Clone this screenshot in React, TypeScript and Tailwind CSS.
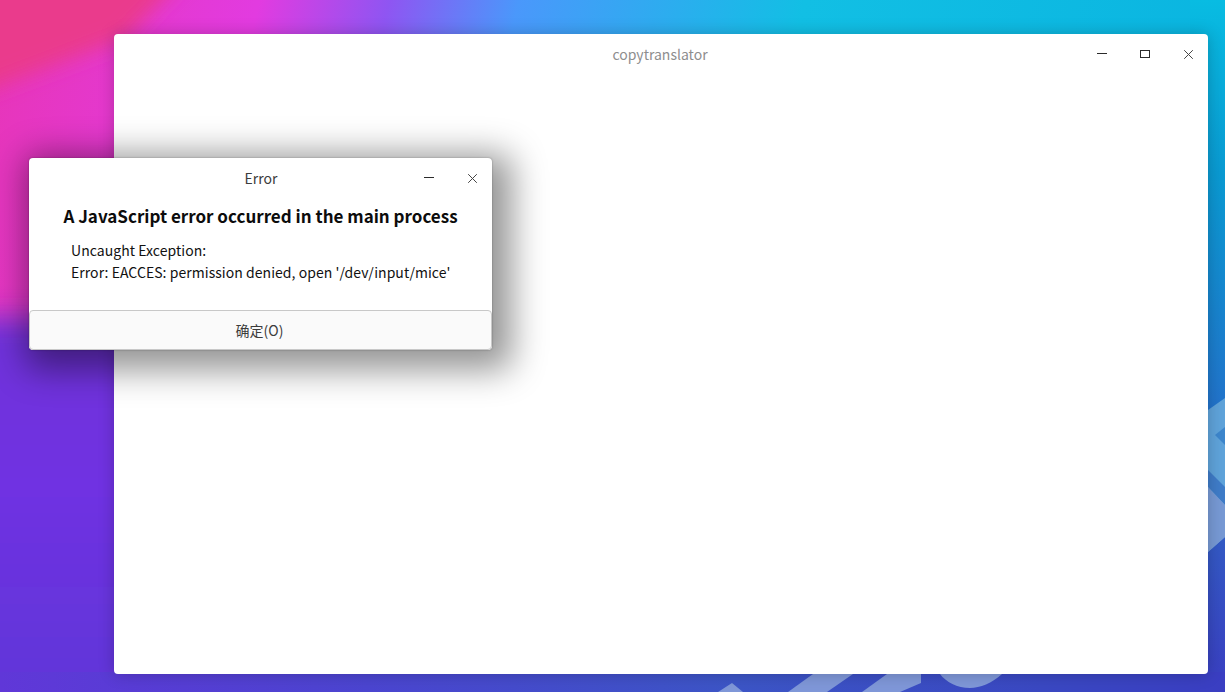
import React from 'react';

const FONT = "font-['Noto_Sans_CJK_SC','Noto_Sans',sans-serif]";

// Desktop wallpaper, only slivers of it are visible around the windows
const Wallpaper = () => (
  <svg className="absolute inset-0" width="1225" height="692" viewBox="0 0 1225 692">
    <defs>
      <linearGradient id="base" x1="0" y1="0" x2="1225" y2="300" gradientUnits="userSpaceOnUse">
        <stop offset="0" stopColor="#e735b8" />
        <stop offset="0.2" stopColor="#e23be0" />
        <stop offset="0.3" stopColor="#8f55f2" />
        <stop offset="0.4" stopColor="#4a98fb" />
        <stop offset="0.62" stopColor="#12bfe4" />
        <stop offset="1" stopColor="#09b4e0" />
      </linearGradient>
      <linearGradient id="low" x1="0" y1="290" x2="0" y2="692" gradientUnits="userSpaceOnUse">
        <stop offset="0" stopColor="#7030d8" />
        <stop offset="0.5" stopColor="#6f30e2" />
        <stop offset="1" stopColor="#6037d8" />
      </linearGradient>
      <linearGradient id="right" x1="1215" y1="0" x2="1215" y2="692" gradientUnits="userSpaceOnUse">
        <stop offset="0" stopColor="#08bce2" />
        <stop offset="0.25" stopColor="#0a9ad2" />
        <stop offset="0.55" stopColor="#1f78cc" />
        <stop offset="0.8" stopColor="#3457c4" />
        <stop offset="1" stopColor="#3a3ec2" />
      </linearGradient>
      <linearGradient id="bottom" x1="0" y1="0" x2="1225" y2="0" gradientUnits="userSpaceOnUse">
        <stop offset="0" stopColor="#6037d8" />
        <stop offset="0.3" stopColor="#4b45d0" />
        <stop offset="0.6" stopColor="#3c55c6" />
        <stop offset="0.85" stopColor="#3a48c2" />
        <stop offset="1" stopColor="#3a3ec2" />
      </linearGradient>
      <filter id="soft"><feGaussianBlur stdDeviation="10" /></filter>
      <filter id="softer"><feGaussianBlur stdDeviation="14" /></filter>
    </defs>
    <rect width="1225" height="692" fill="url(#base)" />
    <polygon points="-30,-30 190,-30 125,38 0,85 -30,96" fill="#ea3a8c" filter="url(#soft)" />
    <polygon points="-60,318 160,318 160,740 -60,740" fill="url(#low)" filter="url(#softer)" />
    <rect x="1190" y="0" width="35" height="692" fill="url(#right)" />
    <rect x="0" y="672" width="1225" height="20" fill="url(#bottom)" />
    {/* isometric shapes, bottom right of the wallpaper */}
    <polygon points="1208,410 1225,398 1225,537 1208,552" fill="#5fa3da" />
    <polygon points="1215,435 1225,427 1225,445" fill="#3d86cc" />
    <polygon points="1208,470 1225,487 1225,505 1208,487" fill="#3f7cc8" />
    <polygon points="1208,487 1225,505 1225,537 1208,552" fill="#7799d4" />
    <g fill="#7f97d8">
      <polygon points="718,692 732,683 743,692" />
      <polygon points="788,692 813,674 853,674 827,692" />
      <polygon points="862,692 887,674 921,674 921,683 900,692" />
    </g>
    <path d="M940 674 H1002 C992 683 980 688 970 688 C957 688 946 682 940 674 Z" fill="#7f97d8" />
  </svg>
);

const MinimizeIcon = () => (
  <svg width="10" height="1" viewBox="0 0 10 1" className="mt-[3px] block">
    <rect width="10" height="1" fill="#2b2b2b" />
  </svg>
);

const MaximizeIcon = () => (
  <svg width="10" height="8" viewBox="0 0 10 8" className="ml-[33px] block">
    <rect x="0.5" y="0.5" width="9" height="7" fill="none" stroke="#2b2b2b" />
  </svg>
);

const CloseIcon = () => (
  <svg width="9" height="9" viewBox="0 0 9 9" className="ml-[34px] block">
    <path d="M0.2 0.2 L8.8 8.8 M8.8 0.2 L0.2 8.8" stroke="#444" strokeWidth="1" fill="none" />
  </svg>
);

const TitleBar = ({ title, color, maximize }: { title: string; color: string; maximize?: boolean }) => (
  <div className="grid h-[42px] shrink-0 grid-cols-[1fr_auto_1fr]">
    <div />
    <span className={`text-[14px] leading-[40px] ${color} ${maximize ? 'pr-[2px]' : 'pl-[1px]'}`}>{title}</span>
    <div className="flex items-start justify-end pr-[15px] pt-[16px]">
      <MinimizeIcon />
      {maximize && <MaximizeIcon />}
      <CloseIcon />
    </div>
  </div>
);

const ErrorDialog = () => (
  <div className="absolute left-[29px] top-[158px] flex h-[192px] w-[463px] flex-col rounded-[4px] bg-white shadow-[0_0_2px_rgba(0,0,0,0.35),8px_8px_34px_12px_rgba(0,0,0,0.42)]">
    <TitleBar title="Error" color="text-[#3c3c3c]" />
    <h1 className="mt-[1px] text-center text-[17px] leading-[30px] font-bold text-[#0c0c0c]">
      A JavaScript error occurred in the main process
    </h1>
    <div className="mt-[8px] pl-[42px] text-[14px] leading-[22px] tracking-[0.05px] text-[#111]">
      <p>Uncaught Exception:</p>
      <p>Error: EACCES: permission denied, open '/dev/input/mice'</p>
    </div>
    <button className="mt-auto h-[40px] w-full rounded-[4px] border border-[#c8c8c8] bg-[#fafafa] pr-[2px] text-[14px] leading-[38px] text-[#3c3c3c]">
      确定(O)
    </button>
  </div>
);

export default function App() {
  return (
    <div className={`relative h-[692px] w-[1225px] overflow-hidden ${FONT}`}>
      <Wallpaper />
      <div className="relative pl-[114px] pt-[34px]">
        <div className="flex h-[640px] w-[1094px] flex-col rounded-[4px] bg-white shadow-[0_0_16px_rgba(0,0,0,0.22)]">
          <TitleBar title="copytranslator" color="text-[#8e8e8e]" maximize />
        </div>
      </div>
      <ErrorDialog />
    </div>
  );
}
